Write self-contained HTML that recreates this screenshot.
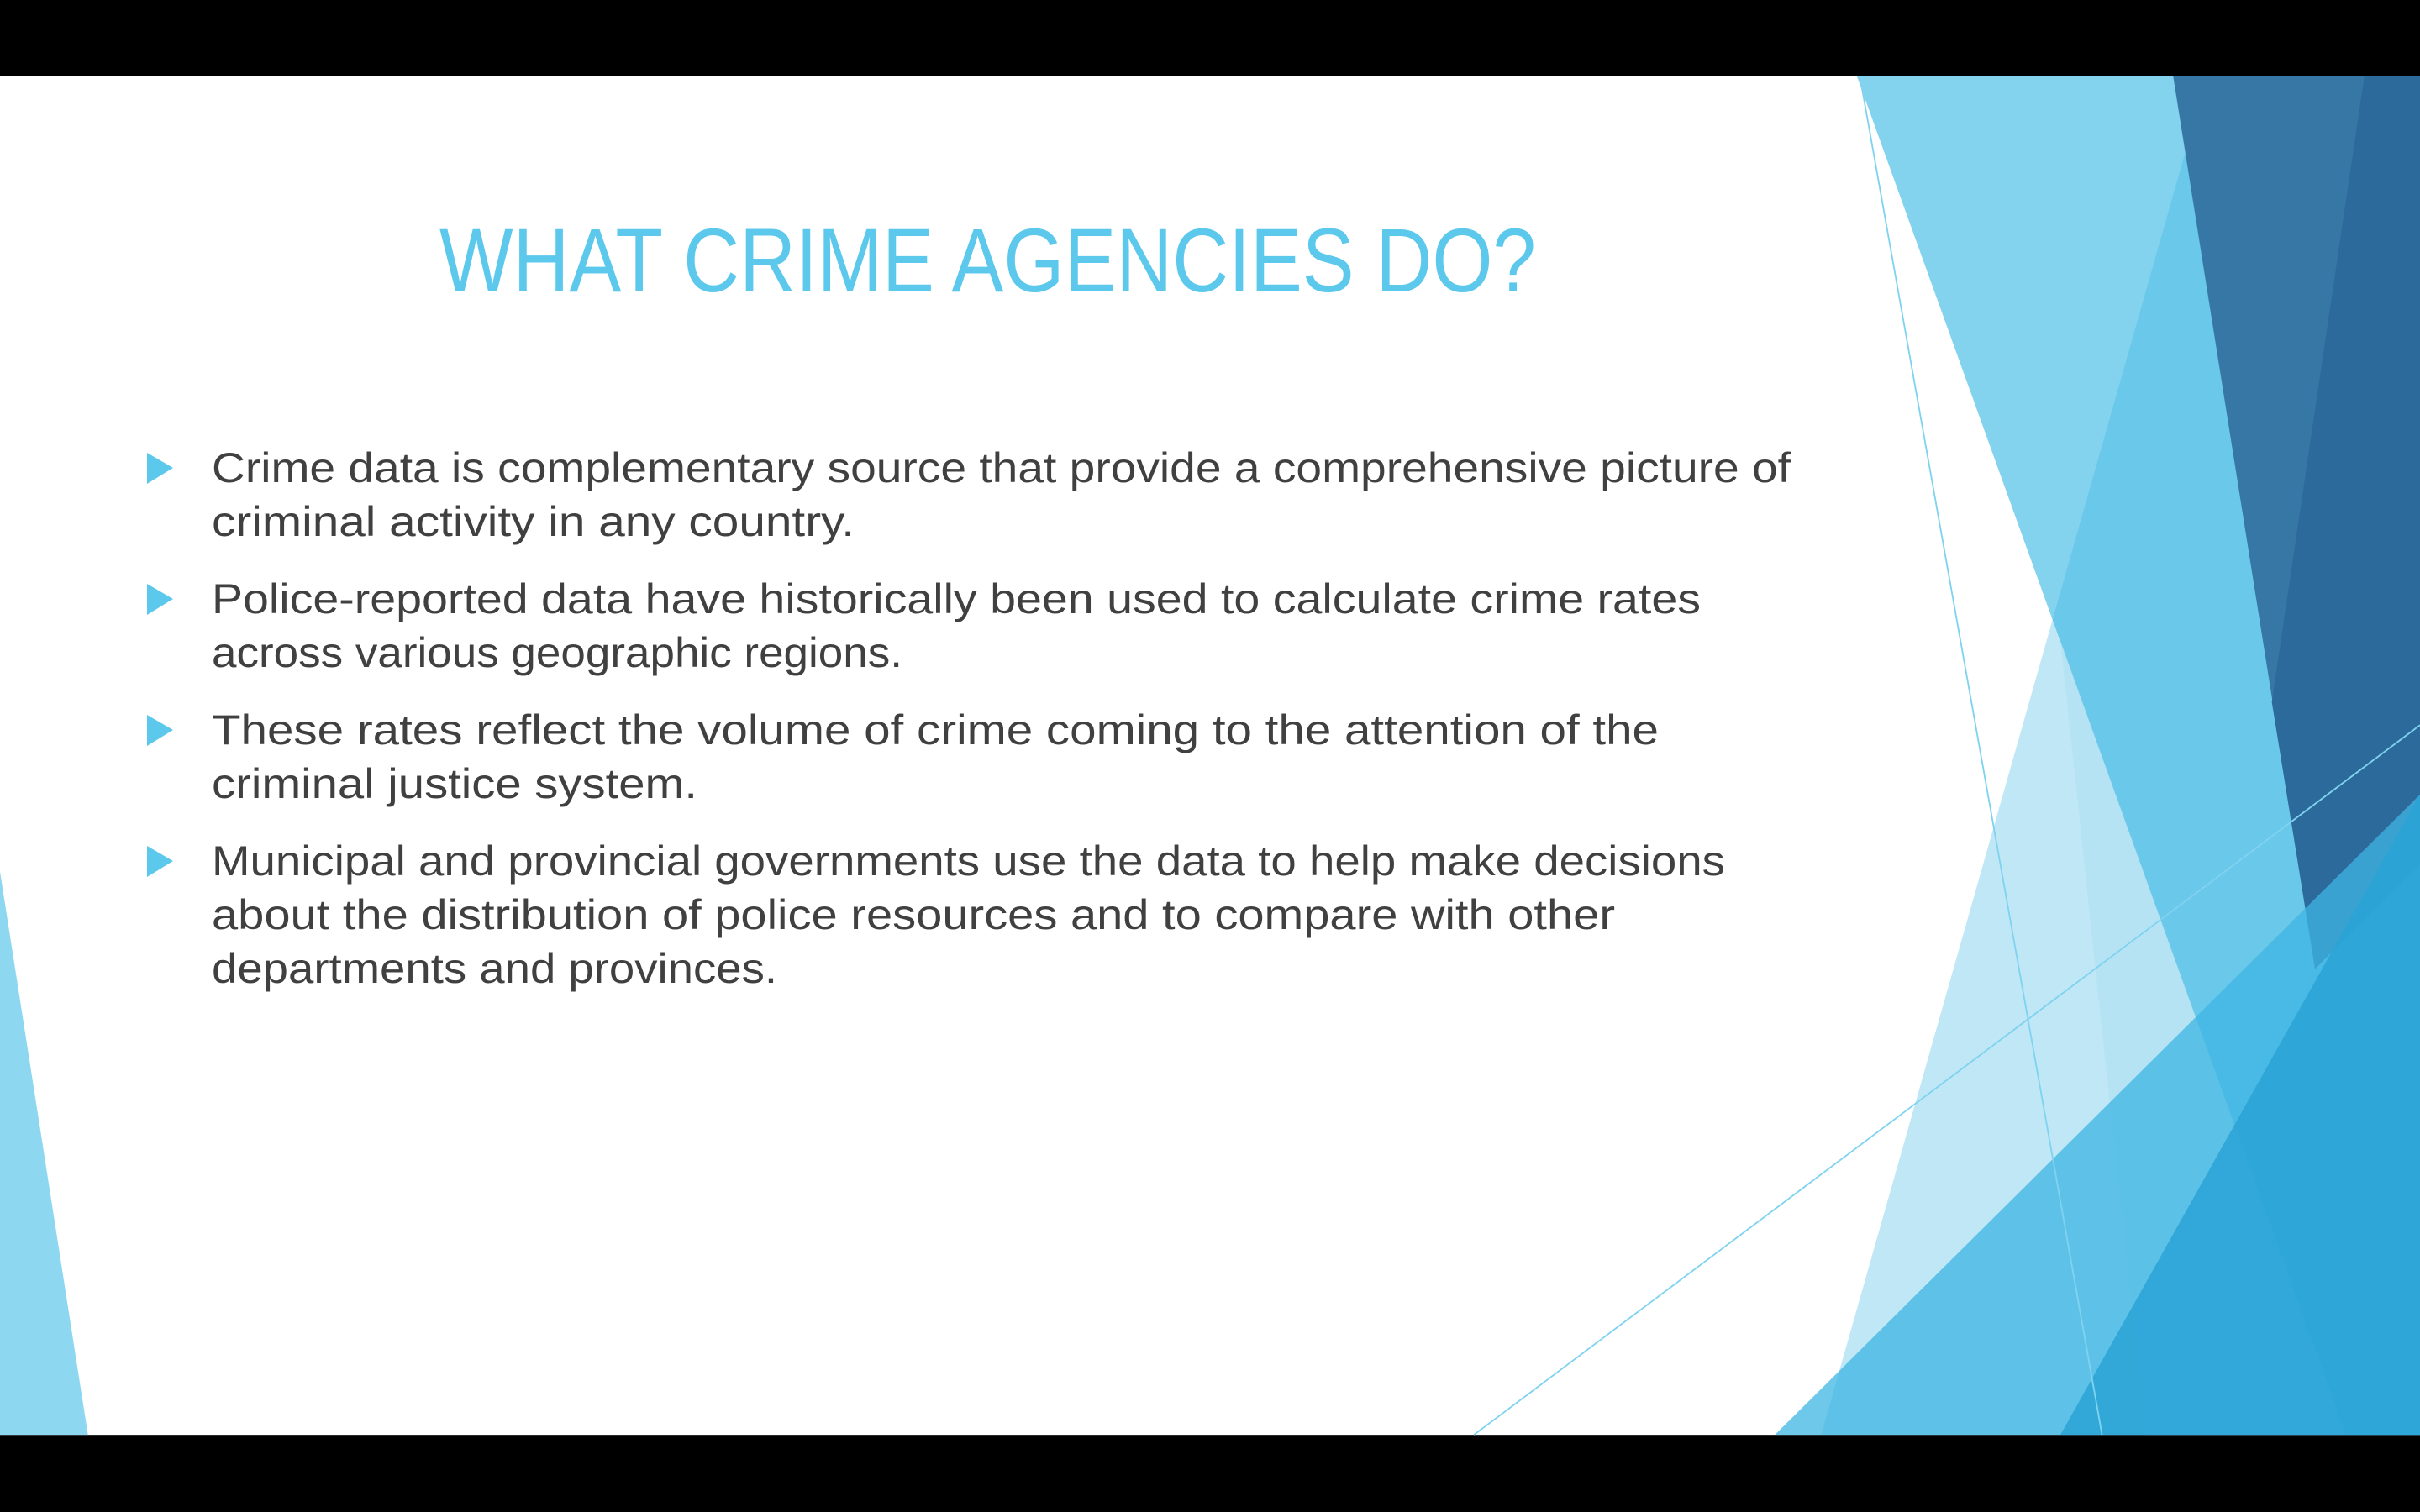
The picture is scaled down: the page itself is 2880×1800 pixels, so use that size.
<!DOCTYPE html>
<html><head><meta charset="utf-8"><style>
html,body{margin:0;padding:0;background:#000;}
body{width:2880px;height:1800px;position:relative;overflow:hidden;}
svg{position:absolute;left:0;top:0;}
</style></head><body>
<svg width="2880" height="1800" viewBox="0 0 1568 980" preserveAspectRatio="none">
<rect x="0" y="0" width="1568" height="980" fill="#000"/>
<rect x="0" y="49" width="1568" height="881" fill="#fff"/>
<polygon points="0,565 0,930 57,930" fill="#8DD8F0"/>
<polygon points="1203,49 1568,49 1568,930 1520,930" fill="#84D3EE"/>
<polygon points="1335,415 1520,930 1390,930" fill="#E0F3FA" opacity="0.5"/>
<polygon points="1430,49 1568,49 1568,930 1180,930" fill="#2FB0E2" opacity="0.3"/>
<polygon points="1408,49 1568,49 1568,560 1500,628" fill="#3677A5"/>
<polygon points="1532,49 1568,49 1568,560 1500,628 1472,455" fill="#2D6A9C"/>
<polygon points="1150,930 1568,515 1568,930" fill="#3DB5E3" opacity="0.75"/>
<polygon points="1335,930 1568,515 1568,930" fill="#2AA3D6" opacity="0.85"/>
<line x1="1205" y1="49" x2="1362" y2="930" stroke="#7FD3F0" stroke-width="1"/>
<line x1="955" y1="930" x2="1568" y2="470" stroke="#7FD3F0" stroke-width="1"/>
</svg>
<svg width="2880" height="1800" viewBox="0 0 2880 1800">
<text x="523" y="347" font-family="Liberation Sans, sans-serif" font-size="108" fill="#5BC8EC" textLength="1305" lengthAdjust="spacingAndGlyphs">WHAT CRIME AGENCIES DO?</text>
<g fill="#5BC8EC">
<polygon points="175,539 175,576 206,557"/>
<polygon points="175,695 175,732 206,713"/>
<polygon points="175,851 175,888 206,869"/>
<polygon points="175,1007 175,1044 206,1025"/>
</g>
<g font-family="Liberation Sans, sans-serif" font-size="50" fill="#404040" lengthAdjust="spacingAndGlyphs">
<text x="252" y="574" textLength="1879" lengthAdjust="spacingAndGlyphs">Crime data is complementary source that provide a comprehensive picture of</text>
<text x="252" y="638" textLength="765" lengthAdjust="spacingAndGlyphs">criminal activity in any country.</text>
<text x="252" y="730" textLength="1772" lengthAdjust="spacingAndGlyphs">Police-reported data have historically been used to calculate crime rates</text>
<text x="252" y="794" textLength="822" lengthAdjust="spacingAndGlyphs">across various geographic regions.</text>
<text x="252" y="886" textLength="1722" lengthAdjust="spacingAndGlyphs">These rates reflect the volume of crime coming to the attention of the</text>
<text x="252" y="950" textLength="578" lengthAdjust="spacingAndGlyphs">criminal justice system.</text>
<text x="252" y="1042" textLength="1801" lengthAdjust="spacingAndGlyphs">Municipal and provincial governments use the data to help make decisions</text>
<text x="252" y="1106" textLength="1670" lengthAdjust="spacingAndGlyphs">about the distribution of police resources and to compare with other</text>
<text x="252" y="1170" textLength="673" lengthAdjust="spacingAndGlyphs">departments and provinces.</text>
</g>
</svg>
</body></html>
